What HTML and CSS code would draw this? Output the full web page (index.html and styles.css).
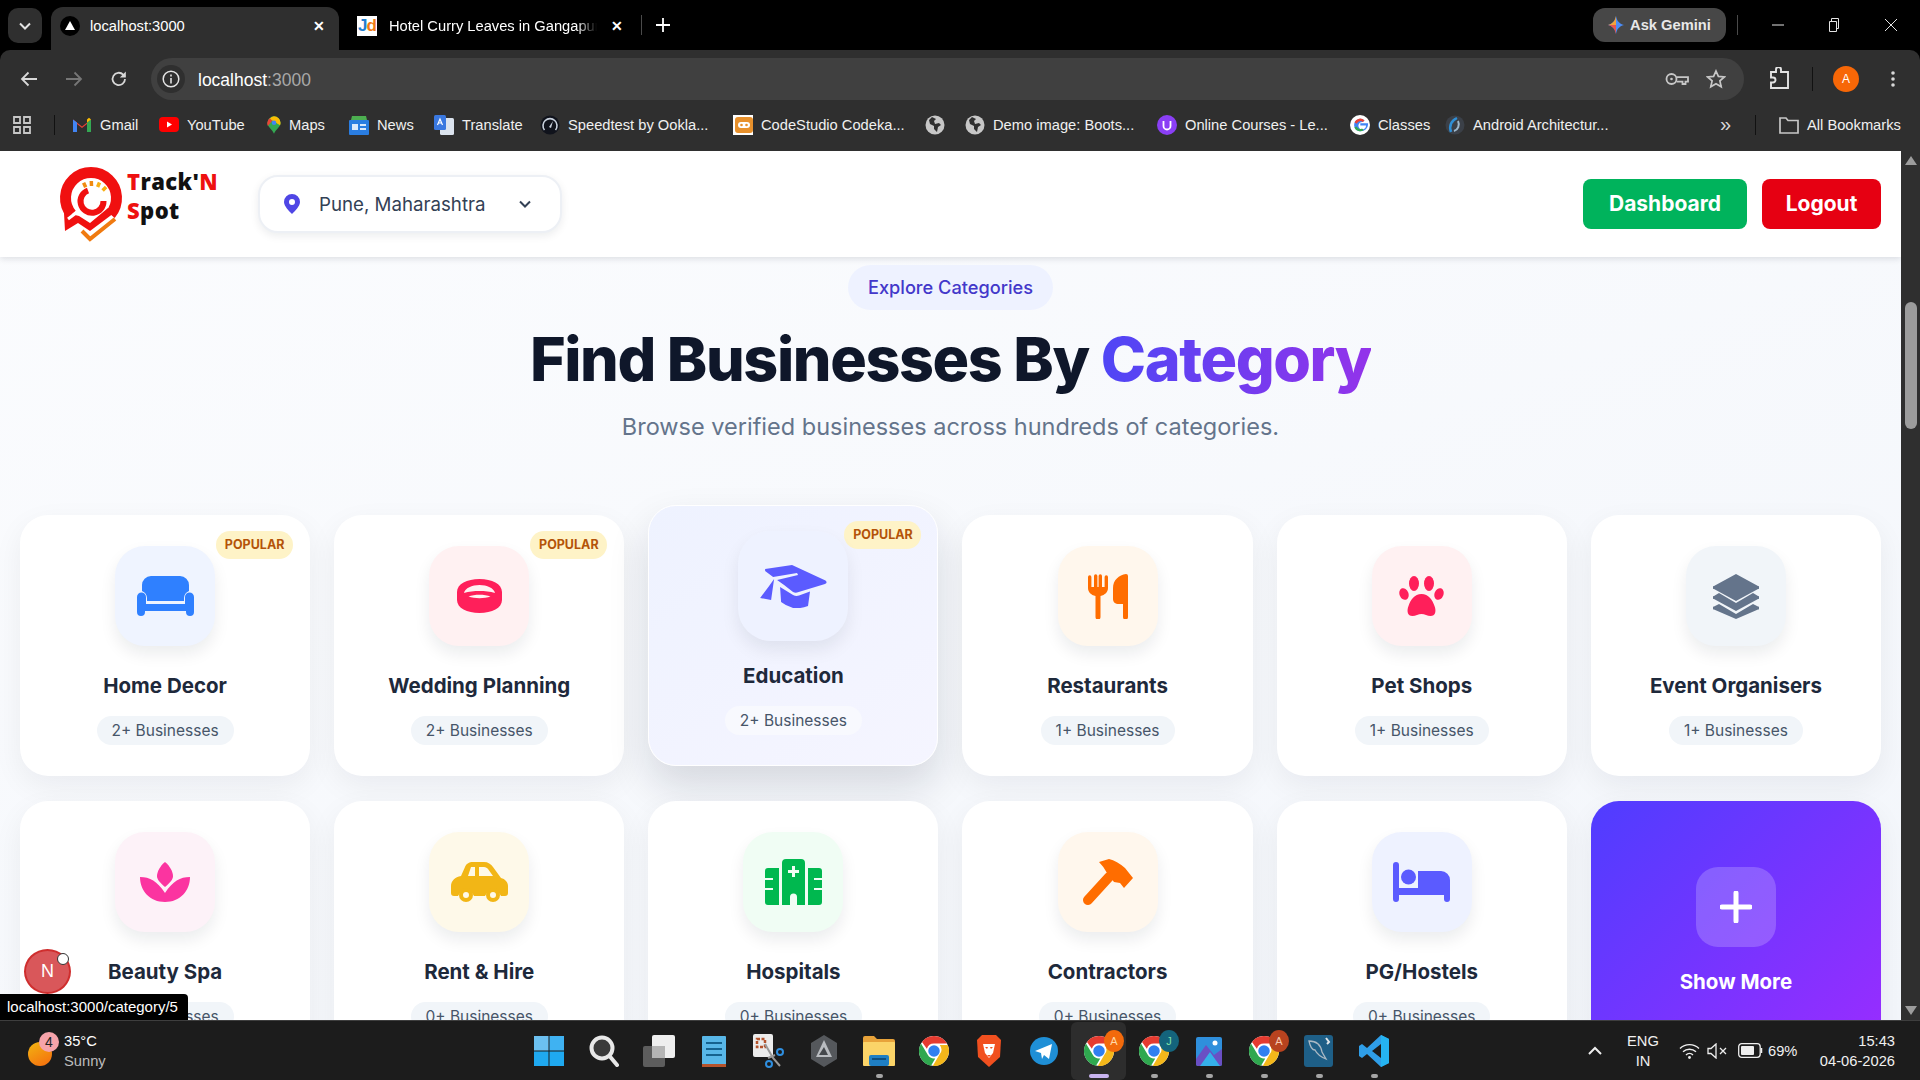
FILE: index.html
```html
<!DOCTYPE html>
<html lang="en">
<head>
    <meta charset="UTF-8">
    <meta name="viewport" content="width=device-width, initial-scale=1.0">
    <title>Track'N Spot</title>
    <link rel="stylesheet" href="styles.css">
</head>
<body>
    <svg class="defs" aria-hidden="true">
        <symbol id="chrome" viewBox="0 0 24 24">
            <circle cx="12" cy="12" r="12" fill="#fff"/>
            <path fill="#e53b30" d="M12 0a12 12 0 0 1 10.4 6H12a6 6 0 0 0-5.7 4.2L2.4 4.7A12 12 0 0 1 12 0z"/>
            <path fill="#2fa84f" d="M1.6 6 7 15a6 6 0 0 0 6 3l-3.4 5.8A12 12 0 0 1 1.6 6z"/>
            <path fill="#f4b71a" d="M23 7.2A12 12 0 0 1 11 24l5.4-9.2a6 6 0 0 0 .2-7.6z"/>
            <circle cx="12" cy="12" r="4.6" fill="#2f7ff0"/>
        </symbol>
        <symbol id="globe" viewBox="0 0 20 20">
            <circle cx="10" cy="10" r="9.5" fill="#c7c7c7"/>
            <path fill="#2f2f2f" d="M7 2 4 5l1 4 4 2v3l3 3 1-5 3-2-2-2-4 1-1-3 2-2z"/>
        </symbol>
    </svg>

    <div class="tabstrip">
        <button class="tab-search">
            <svg width="14" height="14" viewBox="0 0 14 14"><path d="M2 4.5 7 9.5 12 4.5" fill="none" stroke="#e3e3e3" stroke-width="2"/></svg>
        </button>
        <div class="tab tab-active">
            <span class="fav-next"><svg width="12" height="12" viewBox="0 0 12 12"><path d="M6 1 11 10H1z" fill="#fff"/></svg></span>
            <span class="tab-title">localhost:3000</span>
            <span class="tab-close">&#10005;</span>
        </div>
        <div class="tab tab-other">
            <span class="fav-jd"><b>J</b><i>d</i></span>
            <span class="tab-title tab-fade">Hotel Curry Leaves in Gangapur</span>
            <span class="tab-close">&#10005;</span>
        </div>
        <span class="tab-sep"></span>
        <svg class="tab-new" width="14" height="14" viewBox="0 0 14 14"><path d="M7 0v14M0 7h14" stroke="#fff" stroke-width="1.8"/></svg>
        <div class="ask-gemini">
            <svg width="16" height="18" viewBox="0 0 16 18"><path d="M8 0c1 5 3 7.500 8 9-5 1.500-7 4-8 9-1-5-3-7.500-8-9 5-1.500 7-4 8-9z" fill="#4b8df8"/><path d="M8 0C7 5 5 7.500 0 9h8z" fill="#f2a33a"/><path d="M0 9c5 1.500 7 4 8 9V9z" fill="#e8554e"/></svg>
            <span>Ask Gemini</span>
        </div>
        <span class="win-sep"></span>
        <div class="win-controls">
            <svg width="12" height="12" viewBox="0 0 12 12"><path d="M0 6h12" stroke="#e3e3e3"/></svg>
            <svg width="12" height="14" viewBox="0 0 12 14"><path d="M1.500 3.500h7v10h-7zM3.500 3.500v-3h7v10h-2" fill="none" stroke="#e3e3e3"/></svg>
            <svg width="14" height="14" viewBox="0 0 14 14"><path d="M1 1l12 12M13 1 1 13" stroke="#e3e3e3"/></svg>
        </div>
    </div>

    <div class="toolbar">
        <div class="nav-btn"><svg width="18" height="16" viewBox="0 0 18 16"><path d="M17 8H2M8.500 1.500 2 8l6.500 6.500" fill="none" stroke="#d8d8d8" stroke-width="1.800"/></svg></div>
        <div class="nav-btn"><svg width="18" height="16" viewBox="0 0 18 16"><path d="M1 8h15M9.500 1.500 16 8l-6.500 6.500" fill="none" stroke="#767676" stroke-width="1.800"/></svg></div>
        <div class="nav-btn"><svg width="18" height="18" viewBox="0 0 18 18"><path d="M15 9a6.200 6.200 0 1 1-1.800-4.400L15 6.500" fill="none" stroke="#d8d8d8" stroke-width="1.800"/><path d="M15.800 1.500v6h-6z" fill="#d8d8d8"/></svg></div>
        <div class="omnibox">
            <span class="site-info"><svg width="18" height="18" viewBox="0 0 18 18"><circle cx="9" cy="9" r="7.800" fill="none" stroke="#e3e3e3" stroke-width="1.500"/><path d="M9 8v5.500M9 4.500v2" stroke="#e3e3e3" stroke-width="1.600"/></svg></span>
            <span class="url">localhost<span class="url-port">:3000</span></span>
            <svg class="omni-key" width="24" height="14" viewBox="0 0 24 14"><circle cx="6.500" cy="7" r="5" fill="none" stroke="#c7c7c7" stroke-width="1.800"/><circle cx="6.500" cy="7" r="1.300" fill="#c7c7c7"/><path d="M11.500 5.200H23v4.500h-2.500V12h-3V9.700h-6" fill="none" stroke="#c7c7c7" stroke-width="1.800"/></svg>
            <svg class="omni-star" width="20" height="20" viewBox="0 0 20 20"><path d="M10 2l2.400 5.400 5.900.6-4.400 3.900 1.300 5.800L10 14.700l-5.200 3 1.300-5.800L1.700 8l5.900-.6z" fill="none" stroke="#c7c7c7" stroke-width="1.700"/></svg>
        </div>
        <div class="toolbar-end">
            <svg width="22" height="24" viewBox="0 0 22 24"><path d="M2 5h5V2.500a2.500 2.500 0 0 1 5 0V5h7v16H2v-5.500h2a2.500 2.500 0 0 0 0-5H2z" fill="none" stroke="#e3e3e3" stroke-width="1.900"/></svg>
            <span class="toolbar-sep"></span>
            <span class="avatar">A</span>
            <svg width="4" height="16" viewBox="0 0 4 16"><circle cx="2" cy="2" r="1.800" fill="#d8d8d8"/><circle cx="2" cy="8" r="1.800" fill="#d8d8d8"/><circle cx="2" cy="14" r="1.800" fill="#d8d8d8"/></svg>
        </div>
    </div>

    <div class="bookmarks">
        <div class="bm"><svg width="20" height="20" viewBox="0 0 20 20"><path d="M2 2h6v6H2zM12 2h6v6h-6zM2 12h6v6H2zM12 12h6v6h-6z" fill="none" stroke="#c7c7c7" stroke-width="1.800"/></svg></div>
        <div class="bm"><span class="bm-sep"></span></div>
        <div class="bm"><svg width="20" height="16" viewBox="0 0 20 16"><path d="M1 15V2.500l9 7 9-7V15h-4V7l-5 4-5-4v8z" fill="#ea4335"/><path d="M15 15h4V2.500L15 5.500z" fill="#34a853"/><path d="M1 15h4V5.500L1 2.500z" fill="#4285f4"/><path d="M15 5.500 19 2.500 17 .8 15 2.500z" fill="#fbbc04"/></svg><span>Gmail</span></div>
        <div class="bm"><svg width="20" height="15" viewBox="0 0 20 15"><rect width="20" height="15" rx="4" fill="#f00"/><path d="M8 4.500 13 7.500 8 10.500z" fill="#fff"/></svg><span>YouTube</span></div>
        <div class="bm"><svg class="bm-pin" width="14" height="20" viewBox="0 0 16 20"><path d="M8 0a7.500 7.500 0 0 1 7.500 7.500c0 5-5 7-7.500 12.500C5.500 14.500.5 12.500.5 7.500A7.500 7.500 0 0 1 8 0z" fill="#34a853"/><path d="M8 0a7.500 7.500 0 0 1 7.500 7.500c0 1-.2 2-.6 2.800L3 3a7.500 7.500 0 0 1 5-3z" fill="#fbbc04"/><path d="M3 2.200A7.500 7.500 0 0 0 1 11l5-6z" fill="#ea4335"/><circle cx="8" cy="7.500" r="2.600" fill="#4285f4"/></svg><span>Maps</span></div>
        <div class="bm"><svg width="20" height="20" viewBox="0 0 20 20"><path d="M3 1h14l1 4H2z" fill="#4caf50"/><rect y="5" width="20" height="15" rx="1" fill="#2a7de1"/><path d="M3 9h6v6H3zM11 9h6v2h-6zM11 13h6v2h-6z" fill="#dbe8fa"/></svg><span>News</span></div>
        <div class="bm"><svg width="20" height="20" viewBox="0 0 20 20"><rect x="6" y="3" width="14" height="17" rx="1.500" fill="#dbe3ee"/><rect width="12" height="15" rx="1.500" fill="#3a78e0"/><path d="M3.500 10 6 4l2.500 6M4.500 8h3" fill="none" stroke="#fff" stroke-width="1.200"/></svg><span>Translate</span></div>
        <div class="bm"><svg width="20" height="20" viewBox="0 0 20 20"><circle cx="10" cy="10" r="9.500" fill="#10131c"/><path d="M4.500 15a7 7 0 1 1 11 0" fill="none" stroke="#c9d2de" stroke-width="1.600"/><path d="M9 12 13 6l-2 7z" fill="#c9d2de"/></svg><span>Speedtest by Ookla...</span></div>
        <div class="bm"><svg width="20" height="20" viewBox="0 0 20 20"><rect width="20" height="20" fill="#fff"/><rect x="2" y="2" width="18" height="16" rx="3" fill="#e8912c"/><rect x="5" y="7" width="12" height="6" rx="3" fill="#fff"/><circle cx="8.500" cy="10" r="1.300" fill="#e8912c"/><circle cx="13.500" cy="10" r="1.300" fill="#e8912c"/></svg><span>CodeStudio Codeka...</span></div>
        <div class="bm"><svg width="20" height="20"><use href="#globe"/></svg></div>
        <div class="bm"><svg width="20" height="20"><use href="#globe"/></svg><span>Demo image: Boots...</span></div>
        <div class="bm"><svg width="20" height="20" viewBox="0 0 20 20"><circle cx="10" cy="10" r="10" fill="#8a3ff5"/><path d="M6.500 6v5a3.500 3.500 0 0 0 7 0V6" fill="none" stroke="#fff" stroke-width="1.800"/></svg><span>Online Courses - Le...</span></div>
        <div class="bm"><svg width="20" height="20" viewBox="0 0 20 20"><circle cx="10" cy="10" r="10" fill="#fff"/><path d="M16 10.500H10.300V8.200H18c.4 4.500-2.800 8-7.700 8A6.200 6.200 0 1 1 14.500 5.400L12.800 7A3.800 3.800 0 1 0 16 10.500z" fill="#4285f4"/><path d="M4.500 7.200A6.200 6.200 0 0 1 14.500 5.400L12.800 7A3.800 3.800 0 0 0 6.800 8.700z" fill="#ea4335"/><path d="M4.300 12.500a6.200 6.200 0 0 0 9.500 2.500l-1.800-1.600a3.800 3.800 0 0 1-5.400-1.800z" fill="#34a853"/></svg><span>Classes</span></div>
        <div class="bm"><svg width="20" height="20" viewBox="0 0 20 20"><circle cx="10" cy="10" r="9.500" fill="#3b4048"/><path d="M12 3C6 6 4 11 6 17" fill="none" stroke="#2f8fd6" stroke-width="2.500"/><path d="M9 16c4-1 6-6 4-10" fill="none" stroke="#9fb8cc" stroke-width="2"/></svg><span>Android Architectur...</span></div>
        <div class="bm bm-more">&raquo;</div>
        <div class="bm"><span class="bm-sep"></span></div>
        <div class="bm"><svg width="20" height="18" viewBox="0 0 20 18"><path d="M1 2h6l2 2.500h10V17H1z" fill="none" stroke="#c7c7c7" stroke-width="1.700"/></svg><span>All Bookmarks</span></div>
    </div>

    <div class="viewport">
        <div class="page">
            <header class="site-header">
                <div class="logo">
                    <svg width="84" height="76" viewBox="0 0 84 76">
                        <path fill="none" stroke="#f01010" stroke-width="11" d="M55.500 48.400A25.500 25.500 0 1 0 16.500 48.400"/>
                        <path fill="#f01010" d="M9 47 10 65 23 57 35 65 59 47 53 42 35 57 24 50 20 49z"/>
                        <path fill="none" stroke="#fff" stroke-width="3" d="M13 53 25 44"/>
                        <path fill="none" stroke="#f01010" stroke-width="6" d="M33 24.500A11.500 11.500 0 1 0 48.500 35"/>
                        <path fill="none" stroke="#f08a10" stroke-width="3.500" d="M30.700 21.300 28.600 16.800M36.500 20 36.300 15"/>
                        <path fill="none" stroke="#f7b014" stroke-width="3.500" d="M42.600 21 44.500 16.500M47.600 24.400 51.100 20.900"/>
                        <path fill="none" stroke="#f07a10" stroke-width="4" d="M27 65 35 73 60 53"/>
                    </svg>
                    <div class="logo-text">
                        <div><span class="logo-red">T</span>rack'<span class="logo-red">N</span></div>
                        <div><span class="logo-red">S</span>pot</div>
                    </div>
                </div>
                <button class="location">
                    <svg width="16" height="20" viewBox="0 0 16 20"><path fill-rule="evenodd" d="M8 0a8 8 0 0 1 8 8c0 4-5 9-8 12-3-3-8-8-8-12a8 8 0 0 1 8-8zM8 5a3 3 0 1 0 0 6 3 3 0 0 0 0-6z" fill="#4f46e5"/></svg>
                    <span class="location-name">Pune, Maharashtra</span>
                    <svg width="12" height="8" viewBox="0 0 12 8"><path d="M1 1.500 6 6.500 11 1.500" fill="none" stroke="#334155" stroke-width="2"/></svg>
                </button>
                <div class="header-actions">
                    <a class="btn btn-green" href="#">Dashboard</a>
                    <a class="btn btn-red" href="#">Logout</a>
                </div>
            </header>

            <section class="categories">
                <div class="section-head">
                    <span class="eyebrow">Explore Categories</span>
                    <h1>Find Businesses By <span class="accent">Category</span></h1>
                    <p>Browse verified businesses across hundreds of categories.</p>
                </div>
                <div class="category-grid">
                    <a class="card" href="#">
                        <span class="badge">POPULAR</span>
                        <span class="card-icon tone-blue">
                            <svg width="57" height="40" viewBox="0 0 57 40"><path d="M5 9a9 9 0 0 1 9-9h29a9 9 0 0 1 9 9v6a8 8 0 0 0-5 7v3H10v-3a8 8 0 0 0-5-7z"/><path d="M0 21a4.500 4.500 0 0 1 9 0v7h39v-7a4.500 4.500 0 0 1 9 0v15a4 4 0 0 1-8 0v-1H8v1a4 4 0 0 1-8 0z"/></svg>
                        </span>
                        <h3>Home Decor</h3>
                        <span class="count">2+ Businesses</span>
                    </a>
                    <a class="card" href="#">
                        <span class="badge">POPULAR</span>
                        <span class="card-icon tone-rose">
                            <svg width="45" height="34" viewBox="0 0 45 34"><path fill-rule="evenodd" d="M0 13C0 5 10 0 22.500 0S45 5 45 13v8c0 8-10 13-22.500 13S0 29 0 21zM7 14C8 9 15 6 22.500 6S37 9 38 14C33 12.500 28 12 22.500 12S12 12.500 7 14zM11.500 17.500c3-1.200 7-1.700 11-1.700s8 .5 11 1.700c-3 1.200-7 1.700-11 1.700s-8-.5-11-1.700z"/></svg>
                        </span>
                        <h3>Wedding Planning</h3>
                        <span class="count">2+ Businesses</span>
                    </a>
                    <a class="card card-hover" href="#">
                        <span class="badge">POPULAR</span>
                        <span class="card-icon tone-indigo">
                            <svg width="61" height="39" viewBox="0 0 67 43"><path d="M5 4 32 0 65.500 15.500Q68 17.500 65 19L37 27.500Q35 28 33 27L24 20 17 15 38 10 37 8 13 12 5 6z"/><path d="M20 22 33 30Q36 31.500 39 30.500L50 26.500 48 41Q40 44 33 43 26 41 21 37z"/><path d="M9 21 14 14 11 35 0 33z"/></svg>
                        </span>
                        <h3>Education</h3>
                        <span class="count">2+ Businesses</span>
                    </a>
                    <a class="card" href="#">
                        <span class="card-icon tone-orange">
                            <svg width="40" height="45" viewBox="0 0 40 45"><path d="M0 3a1.700 1.700 0 0 1 3.400 0v10H6V2a1.700 1.700 0 0 1 3.400 0v11h1.200V2A1.700 1.700 0 0 1 14 2v11h2.600V3A1.700 1.700 0 0 1 20 3v11c0 4-3 7-7.500 8v21a2.500 2.500 0 0 1-5 0V22C3 21 0 18 0 14z"/><path d="M38 0a2 2 0 0 1 2 2v41a2.500 2.500 0 0 1-5 0V30h-4c-4 0-6-2-6-5V14C25 6 31 1 38 0z"/></svg>
                        </span>
                        <h3>Restaurants</h3>
                        <span class="count">1+ Businesses</span>
                    </a>
                    <a class="card" href="#">
                        <span class="card-icon tone-rose">
                            <svg width="45" height="40" viewBox="0 0 45 40"><ellipse cx="5" cy="18" rx="4.500" ry="6" transform="rotate(-20 5 18)"/><ellipse cx="15" cy="7.500" rx="5" ry="7.500"/><ellipse cx="30" cy="7.500" rx="5" ry="7.500"/><ellipse cx="40" cy="18" rx="4.500" ry="6" transform="rotate(20 40 18)"/><path d="M22.500 18c7 0 11 6 13 12 2 5 1 10-4 10-3 0-6-2-9-2s-6 2-9 2c-5 0-6-5-4-10 2-6 6-12 13-12z"/></svg>
                        </span>
                        <h3>Pet Shops</h3>
                        <span class="count">1+ Businesses</span>
                    </a>
                    <a class="card" href="#">
                        <span class="card-icon tone-slate">
                            <svg width="46" height="45" viewBox="0 0 46 45"><path d="M23 0 45 12a1.500 1.500 0 0 1 0 3L23 27 1 15a1.500 1.500 0 0 1 0-3z"/><path d="M6 19 23 29 40 19l5 3a1.500 1.500 0 0 1 0 3L23 37 1 25a1.500 1.500 0 0 1 0-3z"/><path d="M6 30l17 10 17-10 5 2.500a1.500 1.500 0 0 1 0 3L23 45 1 35.500a1.500 1.500 0 0 1 0-3z"/></svg>
                        </span>
                        <h3>Event Organisers</h3>
                        <span class="count">1+ Businesses</span>
                    </a>

                    <a class="card" href="#">
                        <span class="card-icon tone-pink">
                            <svg width="50" height="40" viewBox="0 0 50 40"><path d="M25 0c5 4 8 10 8 14 0 3-2 6-8 11-6-5-8-8-8-11 0-4 3-10 8-14z"/><path d="M0 15c10 0 17 4 25 16 8-12 15-16 25-16 0 14-10 25-25 25S0 29 0 15z"/></svg>
                        </span>
                        <h3>Beauty Spa</h3>
                        <span class="count">0+ Businesses</span>
                    </a>
                    <a class="card" href="#">
                        <span class="card-icon tone-yellow">
                            <svg width="57" height="40" viewBox="0 0 57 40"><path fill-rule="evenodd" d="M10 14 14 5C15 2 18 0 22 0h11c4 0 7 2 9 5l8 11c4 1 7 4 7 8v7c0 2-1 3-3 3h-4a9 9 0 0 0-16 0H23a9 9 0 0 0-16 0H3c-2 0-3-1-3-3v-7c0-5 4-9 10-10zM17 14h7V5h-4zM28 5v9h14l-5-7c-1-1-2-2-4-2z"/><path fill-rule="evenodd" d="M8 33a7 7 0 1 0 14 0 7 7 0 1 0-14 0zM12 33a3 3 0 1 0 6 0 3 3 0 1 0-6 0zM35 33a7 7 0 1 0 14 0 7 7 0 1 0-14 0zM39 33a3 3 0 1 0 6 0 3 3 0 1 0-6 0z"/></svg>
                        </span>
                        <h3>Rent &amp; Hire</h3>
                        <span class="count">0+ Businesses</span>
                    </a>
                    <a class="card" href="#">
                        <span class="card-icon tone-green">
                            <svg width="57" height="46" viewBox="0 0 57 46"><path fill-rule="evenodd" d="M21 0h15a4 4 0 0 1 4 4v42h-8v-8a3.500 3.500 0 0 0-7 0v8h-8V4a4 4 0 0 1 4-4zM27 7v4h-4v3h4v4h3v-4h4v-3h-4V7z"/><path d="M3 9h11v37H3a3 3 0 0 1-3-3V31h8v-2H0v-8h8v-2H0v-7a3 3 0 0 1 3-3z"/><path d="M54 9H43v37h11a3 3 0 0 0 3-3V31h-8v-2h8v-8h-8v-2h8v-7a3 3 0 0 0-3-3z"/></svg>
                        </span>
                        <h3>Hospitals</h3>
                        <span class="count">0+ Businesses</span>
                    </a>
                    <a class="card" href="#">
                        <span class="card-icon tone-orange">
                            <svg width="51" height="46" viewBox="0 0 51 46"><path d="M17 3 27 0Q35 2 43 9L51 19 42 29 38 24 32 23 25 14Q22 8 17 3z"/><path d="M27 18 6 41" fill="none" stroke="currentColor" stroke-width="10" stroke-linecap="round"/></svg>
                        </span>
                        <h3>Contractors</h3>
                        <span class="count">0+ Businesses</span>
                    </a>
                    <a class="card" href="#">
                        <span class="card-icon tone-indigo">
                            <svg width="57" height="40" viewBox="0 0 57 40"><path d="M3 0a3 3 0 0 1 3 3v23h19V9h23a9 9 0 0 1 9 9v19a3 3 0 0 1-6 0v-4H6v4a3 3 0 0 1-6 0V3a3 3 0 0 1 3-3z"/><circle cx="15.500" cy="15" r="7.500"/></svg>
                        </span>
                        <h3>PG/Hostels</h3>
                        <span class="count">0+ Businesses</span>
                    </a>
                    <a class="card card-more" href="#">
                        <span class="more-icon">
                            <svg width="32" height="32" viewBox="0 0 32 32"><path d="M16 2v28M2 16h28" stroke="#fff" stroke-width="5" stroke-linecap="round"/></svg>
                        </span>
                        <h3>Show More</h3>
                    </a>
                </div>
            </section>
        </div>

        <div class="scrollbar">
            <span class="arrow-up"></span>
            <span class="thumb"></span>
            <span class="arrow-down"></span>
        </div>

        <div class="next-badge"><span>N</span><i></i></div>
        <div class="link-status">localhost:3000/category/5</div>
    </div>

    <footer class="taskbar">
        <div class="weather">
            <span class="weather-icon"><b>4</b></span>
            <div class="weather-text">
                <div>35°C</div>
                <div class="muted">Sunny</div>
            </div>
        </div>
        <div class="task-icons">
            <span class="task"><svg width="32" height="32" viewBox="0 0 32 32"><path d="M1 1h14.500v14.500H1z" fill="#6cc0f0"/><path d="M16.500 1H31v14.500H16.500z" fill="#3fb2f2"/><path d="M1 16.500h14.500V31H1zM16.500 16.500H31V31H16.500z" fill="#1fa9f0"/></svg></span>
            <span class="task"><svg width="30" height="32" viewBox="0 0 30 32"><circle cx="13" cy="13" r="10.500" fill="#3a3a3a" stroke="#e8e8e8" stroke-width="4"/><path d="M20.500 21 28 30" stroke="#e8e8e8" stroke-width="4" stroke-linecap="round"/></svg></span>
            <span class="task"><svg width="32" height="32" viewBox="0 0 32 32"><rect x="0" y="11" width="22" height="21" rx="2" fill="#5d5d5d"/><rect x="9" y="0" width="23" height="23" rx="2" fill="#efefef"/><rect x="9" y="11" width="13" height="12" fill="#b5b5b5"/></svg></span>
            <span class="task"><svg width="24" height="32" viewBox="0 0 24 32"><rect y="1" width="24" height="29" rx="1" fill="#58b7e8"/><rect y="29" width="24" height="3" fill="#b5532c"/><path d="M4 8h16M4 14h16M4 20h16" stroke="#15628f" stroke-width="2"/></svg></span>
            <span class="task"><svg width="32" height="34" viewBox="0 0 32 34"><rect width="20" height="23" rx="2" fill="#ececec"/><path d="M4 5h8v8H4z" fill="none" stroke="#b5532c" stroke-width="2.500" stroke-dasharray="3 1.500"/><path d="M12 10 20 24 27 32M15 24l7-3" fill="none" stroke="#9a9a9a" stroke-width="2"/><circle cx="27" cy="18" r="3" fill="none" stroke="#2f8fe0" stroke-width="2"/><circle cx="16" cy="30" r="3" fill="none" stroke="#2f8fe0" stroke-width="2"/></svg></span>
            <span class="task"><svg width="26" height="32" viewBox="0 0 26 32"><path d="M13 0 26 8v16l-13 8L0 24V8z" fill="#55585c"/><path d="M13 5 21 22H5z" fill="#b9bcc0"/><path d="M13 12 17 20H8z" fill="#45484c"/></svg></span>
            <span class="task task-open"><svg width="32" height="30" viewBox="0 0 32 30"><path d="M0 2a2 2 0 0 1 2-2h9l3 3h16a2 2 0 0 1 2 2v3H0z" fill="#e8a33a"/><rect y="6" width="32" height="24" rx="1" fill="#fbd468"/><rect x="6" y="19" width="20" height="11" rx="2" fill="#1f7fc4"/><path d="M9 23h14" stroke="#0e4f80" stroke-width="2"/></svg></span>
            <span class="task"><svg width="30" height="30"><use href="#chrome"/></svg></span>
            <span class="task"><svg width="26" height="32" viewBox="0 0 26 32"><path d="M6 0h14l5 5-1 17-11 10L2 22 1 5z" fill="#f1501f"/><path d="M7 9h12l-2 9-4 5-4-5z" fill="#fff"/><path d="M9 12h3l-1 2zM17 12h-3l1 2zM11 20h4l-2 2z" fill="#f1501f"/></svg></span>
            <span class="task"><svg width="28" height="28" viewBox="0 0 28 28"><circle cx="14" cy="14" r="14" fill="#1f8fd6"/><path d="M5 14 22 7l-3 15-5-4-2 4-1-6z" fill="#fff"/></svg></span>
            <span class="task task-active">
                <svg width="30" height="30"><use href="#chrome"/></svg>
                <span class="task-badge badge-orange">A</span>
            </span>
            <span class="task task-open">
                <svg width="30" height="30"><use href="#chrome"/></svg>
                <span class="task-badge badge-teal">J</span>
            </span>
            <span class="task task-open"><svg width="26" height="32" viewBox="0 0 26 32"><rect y="2" width="26" height="29" rx="2" fill="#2f8fdc"/><path d="M0 24 10 10l8 10 8-6v15a2 2 0 0 1-2 2H2a2 2 0 0 1-2-2z" fill="#6a4fc4"/><path d="M4 31 14 17l10 14z" fill="#35b0ea"/><circle cx="19" cy="8" r="2.500" fill="#fff"/></svg></span>
            <span class="task task-open">
                <svg width="30" height="30"><use href="#chrome"/></svg>
                <span class="task-badge badge-red">A</span>
            </span>
            <span class="task task-open"><svg width="29" height="32" viewBox="0 0 29 32"><rect width="29" height="32" rx="3" fill="#1e5f87"/><path d="M5 6c8 0 12 5 13 11l4 7c-5-2-9-5-11-9-3 0-5-4-6-9z" fill="none" stroke="#aab9c4" stroke-width="1.300"/><path d="M22 3l3 4-2 2" fill="none" stroke="#dfe6ea" stroke-width="2"/></svg></span>
            <span class="task task-open"><svg width="30" height="32" viewBox="0 0 30 32"><path d="M22 0 30 4v24l-8 4L8 19 3 23 0 21v-10l3-2 5 4z" fill="#2f9ee8"/><path d="M22 0 30 4v24l-8 4z" fill="#25b4f2"/><path d="M22 9 13 16l9 7z" fill="#1c1c1c"/></svg></span>
        </div>
        <div class="tray">
            <svg class="tray-chevron" width="14" height="9" viewBox="0 0 14 9"><path d="M1 8l6-6 6 6" fill="none" stroke="#eee" stroke-width="2"/></svg>
            <div class="tray-lang"><div>ENG</div><div>IN</div></div>
            <svg class="tray-wifi" width="21" height="16" viewBox="0 0 21 16"><path d="M1 5.500a13.500 13.500 0 0 1 19 0M4 8.800a9.500 9.500 0 0 1 13 0M7 12a5 5 0 0 1 7 0" fill="none" stroke="#eee" stroke-width="1.400"/><circle cx="10.500" cy="14.500" r="1.400" fill="#eee"/></svg>
            <svg class="tray-sound" width="20" height="16" viewBox="0 0 20 16"><path d="M1 5.500h3L9 1v14L4 10.500H1z" fill="none" stroke="#eee" stroke-width="1.300"/><path d="M13 5l6 6M19 5l-6 6" stroke="#eee" stroke-width="1.300"/></svg>
            <svg class="tray-battery" width="25" height="15" viewBox="0 0 25 15"><rect x=".7" y=".7" width="21.500" height="13.600" rx="3" fill="none" stroke="#eee" stroke-width="1.300"/><rect x="3" y="3" width="13" height="9" rx="1" fill="#eee"/><path d="M23.500 5v5" stroke="#eee" stroke-width="1.500"/></svg>
            <span class="tray-pct">69%</span>
            <div class="tray-clock"><div>15:43</div><div>04-06-2026</div></div>
        </div>
    </footer>
</body>
</html>
```

FILE: styles.css
```css
* {
    box-sizing: border-box;
}
body {
    margin: 0;
    width: 1920px;
    height: 1080px;
    overflow: hidden;
    display: flex;
    flex-direction: column;
    font-family: "Liberation Sans", Arial, sans-serif;
    font-size: 14.7px;
    color: #fff;
    background-color: #000;
}
a {
    text-decoration: none;
    color: inherit;
}
button {
    font: inherit;
    border: none;
    padding: 0;
}
.defs {
    position: absolute;
    width: 0;
    height: 0;
}

/* browser tabs */
.tabstrip {
    height: 50px;
    flex: none;
    display: flex;
    align-items: flex-end;
    background-color: #000;
    padding-left: 8px;
}
.tab-search {
    width: 34px;
    height: 35px;
    margin-bottom: 7px;
    display: flex;
    align-items: center;
    justify-content: center;
    background-color: #2f2f2f;
    border-radius: 10px;
}
.tab {
    height: 43px;
    display: flex;
    align-items: center;
    padding-bottom: 0;
}
.tab-active {
    width: 288px;
    margin-left: 9px;
    padding: 0 14px 6px 9px;
    background-color: #2f2f2f;
    border-radius: 12px 12px 0 0;
}
.tab-other {
    width: 300px;
    padding: 0 16px 6px 18px;
}
.tab-title {
    flex: 1;
    margin-left: 10px;
    white-space: nowrap;
    overflow: hidden;
}
.tab-fade {
    margin-left: 12px;
    -webkit-mask-image: linear-gradient(to right, #000 90%, transparent);
    mask-image: linear-gradient(to right, #000 90%, transparent);
}
.tab-close {
    font-size: 14px;
    font-weight: bold;
    margin-left: 14px;
}
.fav-next {
    width: 20px;
    height: 20px;
    display: flex;
    align-items: center;
    justify-content: center;
    background-color: #000;
    border-radius: 50%;
}
.fav-jd {
    width: 20px;
    height: 20px;
    background-color: #fff;
    font-size: 17px;
    line-height: 20px;
    text-align: center;
    letter-spacing: -1px;
}
.fav-jd b {
    color: #1f7fd0;
}
.fav-jd i {
    color: #f07a14;
    font-style: normal;
    font-weight: bold;
}
.tab-sep {
    width: 1px;
    height: 20px;
    margin: 0 14px 15px 2px;
    background-color: #4a4a4a;
}
.tab-new {
    margin: 0 0 18px 0;
}
.ask-gemini {
    margin-left: auto;
    margin-bottom: 8px;
    width: 133px;
    height: 34px;
    display: flex;
    align-items: center;
    justify-content: center;
    gap: 6px;
    background-color: #474747;
    border-radius: 12px;
    font-weight: bold;
    color: #e8e8e8;
}
.win-sep {
    width: 1px;
    height: 20px;
    margin: 0 0 15px 11px;
    background-color: #4a4a4a;
}
.win-controls {
    width: 182px;
    height: 50px;
    display: flex;
    align-items: center;
    justify-content: space-between;
    padding: 0 22px 0 34px;
}

/* address bar */
.toolbar {
    height: 58px;
    flex: none;
    display: flex;
    align-items: center;
    padding-left: 6px;
    background-color: #2f2f2f;
    border-radius: 10px 10px 0 0;
}
.nav-btn {
    width: 45px;
    display: flex;
    justify-content: center;
}
.omnibox {
    flex: 1;
    height: 42px;
    margin-left: 10px;
    display: flex;
    align-items: center;
    padding: 0 18px 0 6px;
    background-color: #404040;
    border-radius: 21px;
}
.site-info {
    width: 28px;
    height: 28px;
    display: flex;
    align-items: center;
    justify-content: center;
    background-color: #2f2f2f;
    border-radius: 50%;
}
.url {
    flex: 1;
    margin-left: 13px;
    padding-top: 2px;
    font-size: 17.5px;
}
.url-port {
    color: #a8a8a8;
}
.omni-key {
    margin-right: 17px;
}
.toolbar-end {
    width: 176px;
    display: flex;
    align-items: center;
    padding-left: 25px;
}
.toolbar-sep {
    width: 1px;
    height: 24px;
    margin: 0 20px 0 21px;
    background-color: #111;
}
.avatar {
    width: 26px;
    height: 26px;
    margin-right: 32px;
    border-radius: 50%;
    background-color: #f76707;
    font-size: 12px;
    line-height: 26px;
    text-align: center;
}

/* bookmarks */
.bookmarks {
    height: 43px;
    flex: none;
    display: grid;
    grid-template-columns: 42px 18px 87px 105px 85px 85px 106px 193px 192px 40px 192px 193px 95px 272px 38px 24px 1fr;
    align-items: center;
    padding: 0 0 10px 12px;
    background-color: #2f2f2f;
    color: #f0f0f0;
}
.bm {
    display: flex;
    align-items: center;
    gap: 8px;
    white-space: nowrap;
}
.bm-pin {
    margin-left: 3px;
}
.bm-sep {
    width: 1px;
    height: 20px;
    background-color: #111;
}
.bm-more {
    font-size: 20px;
    color: #d8d8d8;
    padding-left: 3px;
}

/* page area */
.viewport {
    flex: 1;
    min-height: 0;
    position: relative;
    display: flex;
    overflow: hidden;
}
.page {
    flex: 1;
    min-width: 0;
    font-family: Inter, "Liberation Sans", sans-serif;
    color: #1e293b;
    background: linear-gradient(160deg, #fbfcfe, #f3f6fb);
}
.site-header {
    height: 106px;
    display: flex;
    align-items: center;
    padding: 0 20px 0 55px;
    background-color: #fff;
    box-shadow: 0 2px 6px rgba(15, 23, 42, 0.12);
}
.logo {
    width: 203px;
    display: flex;
    align-items: center;
}
.logo svg {
    flex: none;
}
.logo-text {
    margin: -16px 0 0 -12px;
    font-family: "Open Sans", sans-serif;
    font-size: 22px;
    font-weight: 800;
    line-height: 29px;
    color: #111;
    letter-spacing: 0.4px;
}
.logo-red {
    color: #ee1010;
}
.location {
    width: 304px;
    height: 58px;
    display: flex;
    align-items: center;
    padding: 0 29px 0 24px;
    background-color: #fff;
    border: 2px solid #edf0f5;
    border-radius: 20px;
    box-shadow: 0 3px 8px rgba(15, 23, 42, 0.08);
}
.location-name {
    flex: 1;
    margin-left: 19px;
    text-align: left;
    font-size: 18.7px;
    color: #334155;
}
.header-actions {
    margin-left: auto;
    display: flex;
    gap: 15px;
}
.btn {
    height: 50px;
    line-height: 50px;
    border-radius: 8px;
    font-size: 21px;
    font-weight: 700;
    color: #fff;
    text-align: center;
}
.btn-green {
    width: 164px;
    background-color: #00b35c;
}
.btn-red {
    width: 119px;
    background-color: #e60012;
}
.categories {
    padding: 8px 20px 0;
}
.section-head {
    height: 250px;
    display: flex;
    flex-direction: column;
    align-items: center;
}
.eyebrow {
    height: 45px;
    line-height: 45px;
    padding: 0 20px;
    background-color: #eef2ff;
    border-radius: 23px;
    font-size: 18.2px;
    font-weight: 500;
    color: #4338ca;
}
.section-head h1 {
    margin: 9px 0 0;
    font-size: 61px;
    line-height: 80px;
    font-weight: 800;
    letter-spacing: -1.4px;
    color: #0f172a;
}
.accent {
    background: linear-gradient(90deg, #4f46f5, #9333ea);
    -webkit-background-clip: text;
    background-clip: text;
    color: transparent;
}
.section-head p {
    margin: 11px 0 0;
    font-size: 23.5px;
    line-height: 34px;
    color: #64748b;
}
.category-grid {
    display: grid;
    grid-template-columns: repeat(6, 1fr);
    gap: 25px 24px;
}
.card {
    position: relative;
    height: 261px;
    display: flex;
    flex-direction: column;
    align-items: center;
    padding-top: 31px;
    background-color: #fff;
    border-radius: 28px;
    box-shadow: 0 10px 30px rgba(15, 23, 42, 0.06);
}
.card-hover {
    transform: translateY(-10px);
    background: linear-gradient(145deg, #eef2ff, #f5f5ff);
    border: 1px solid #fff;
    padding-top: 30px;
    box-shadow: 0 20px 40px rgba(15, 23, 42, 0.14);
}
.card-hover .card-icon {
    transform: scale(1.1);
}
.badge {
    position: absolute;
    top: 16px;
    right: 17px;
    width: 77px;
    height: 28px;
    line-height: 28px;
    text-align: center;
    background-color: #fef3c7;
    border-radius: 14px;
    font-size: 12.5px;
    font-weight: 700;
    color: #b45309;
}
.card-hover .badge {
    top: 15px;
    right: 16px;
}
.card-icon {
    width: 100px;
    height: 100px;
    flex: none;
    display: flex;
    align-items: center;
    justify-content: center;
    border-radius: 30px;
    box-shadow: 0 8px 16px rgba(15, 23, 42, 0.08);
}
.card-icon svg {
    fill: currentColor;
}
.tone-blue { background-color: #eff4ff; color: #2f80ff; }
.tone-rose { background-color: #fff1f2; color: #ff1f5a; }
.tone-indigo { background-color: #eef2ff; color: #5b5bff; }
.tone-orange { background-color: #fff7ed; color: #ff6d00; }
.tone-slate { background-color: #f1f5f9; color: #64748b; }
.tone-pink { background-color: #fdf2f8; color: #fb34a0; }
.tone-yellow { background-color: #fef9e9; color: #f2b616; }
.tone-green { background-color: #f0fdf4; color: #00b84f; }
.card h3 {
    margin: 25px 0 0;
    font-size: 20.5px;
    line-height: 30px;
    font-weight: 700;
    color: #1e293b;
}
.count {
    height: 29px;
    margin-top: 15px;
    padding: 0 15px;
    line-height: 29px;
    background-color: #f1f5f9;
    border-radius: 15px;
    font-size: 15.5px;
    color: #475569;
}
.card-hover .count {
    background-color: #f8f9fe;
}
.card-more {
    padding-top: 66px;
    background: linear-gradient(135deg, #4f3dff, #9b2cff);
}
.more-icon {
    width: 80px;
    height: 80px;
    display: flex;
    align-items: center;
    justify-content: center;
    background-color: rgba(255, 255, 255, 0.2);
    border-radius: 22px;
}
.card-more h3 {
    margin-top: 20px;
    color: #fff;
}

/* chrome scrollbar */
.scrollbar {
    width: 19px;
    flex: none;
    position: relative;
    background-color: #2f2f2f;
}
.thumb {
    position: absolute;
    top: 151px;
    left: 4px;
    width: 12px;
    height: 127px;
    background-color: #9c9c9c;
    border-radius: 6px;
}
.arrow-up, .arrow-down {
    position: absolute;
    left: 4px;
    width: 0;
    height: 0;
    border-left: 6px solid transparent;
    border-right: 6px solid transparent;
}
.arrow-up {
    top: 5px;
    border-bottom: 9px solid #9c9c9c;
}
.arrow-down {
    bottom: 5px;
    border-top: 9px solid #9c9c9c;
}

/* overlays */
.next-badge {
    position: absolute;
    left: 24px;
    bottom: 26px;
    width: 47px;
    height: 45px;
    display: flex;
    align-items: center;
    justify-content: center;
    background-color: #d9575a;
    border: 2px solid #cf2e2e;
    border-radius: 50%;
    font-family: "Liberation Sans", sans-serif;
    font-size: 18px;
}
.next-badge i {
    position: absolute;
    top: 2px;
    right: 0;
    width: 12px;
    height: 12px;
    background-color: #fff;
    border: 1px solid #333;
    border-radius: 50%;
}
.link-status {
    position: absolute;
    left: 0;
    bottom: 0;
    width: 188px;
    height: 26px;
    line-height: 26px;
    padding-left: 7px;
    background-color: #000;
    border-top-right-radius: 4px;
    font-size: 15px;
    white-space: nowrap;
}

/* windows taskbar */
.taskbar {
    height: 60px;
    flex: none;
    display: flex;
    align-items: center;
    background-color: #1c1c1c;
    border-top: 1px solid #3e3e3e;
}
.weather {
    width: 521px;
    flex: none;
    display: flex;
    align-items: center;
    padding-left: 28px;
}
.weather-icon {
    position: relative;
    width: 24px;
    height: 24px;
    margin-top: 6px;
    background: linear-gradient(150deg, #f2b612, #f56a0e);
    border-radius: 50%;
}
.weather-icon b {
    position: absolute;
    top: -10px;
    left: 11px;
    width: 20px;
    height: 20px;
    line-height: 20px;
    text-align: center;
    font-weight: normal;
    font-size: 14px;
    color: #222;
    background-color: #f6a3aa;
    border-radius: 50%;
}
.weather-text {
    margin-left: 12px;
    line-height: 20px;
}
.muted {
    color: #bdbdbd;
}
.task-icons {
    display: flex;
}
.task {
    position: relative;
    width: 55px;
    height: 58px;
    display: flex;
    align-items: center;
    justify-content: center;
}
.task-open::after, .task-active::after {
    content: '';
    position: absolute;
    bottom: 2px;
    left: 50%;
    width: 7px;
    height: 4px;
    margin-left: -3px;
    background-color: #a5a5a5;
    border-radius: 2px;
}
.task-active {
    background-color: #2d2d2d;
    border-radius: 6px;
}
.task-active::after {
    width: 20px;
    margin-left: -10px;
    background-color: #c9b4f0;
}
.task-badge {
    position: absolute;
    top: 8px;
    right: 2px;
    width: 20px;
    height: 22px;
    line-height: 22px;
    text-align: center;
    font-size: 11px;
    border-radius: 50%;
}
.badge-orange { background-color: #f26a0c; color: #ffd9a8; }
.badge-teal { background-color: #14647c; color: #7fe0a8; }
.badge-red { background-color: #b8431f; color: #f5c8b0; }
.tray {
    margin-left: auto;
    width: 345px;
    position: relative;
    display: flex;
    align-items: center;
    color: #f0f0f0;
    padding-right: 25px;
}
.tray-chevron {
    margin-left: 13px;
}
.tray-lang {
    width: 60px;
    margin-left: 11px;
    text-align: center;
    line-height: 20px;
}
.tray-wifi {
    margin-left: 6px;
}
.tray-sound {
    margin-left: 7px;
}
.tray-battery {
    margin-left: 11px;
}
.tray-pct {
    margin-left: 5px;
}
.tray-clock {
    margin-left: auto;
    text-align: right;
    line-height: 20px;
}
```
